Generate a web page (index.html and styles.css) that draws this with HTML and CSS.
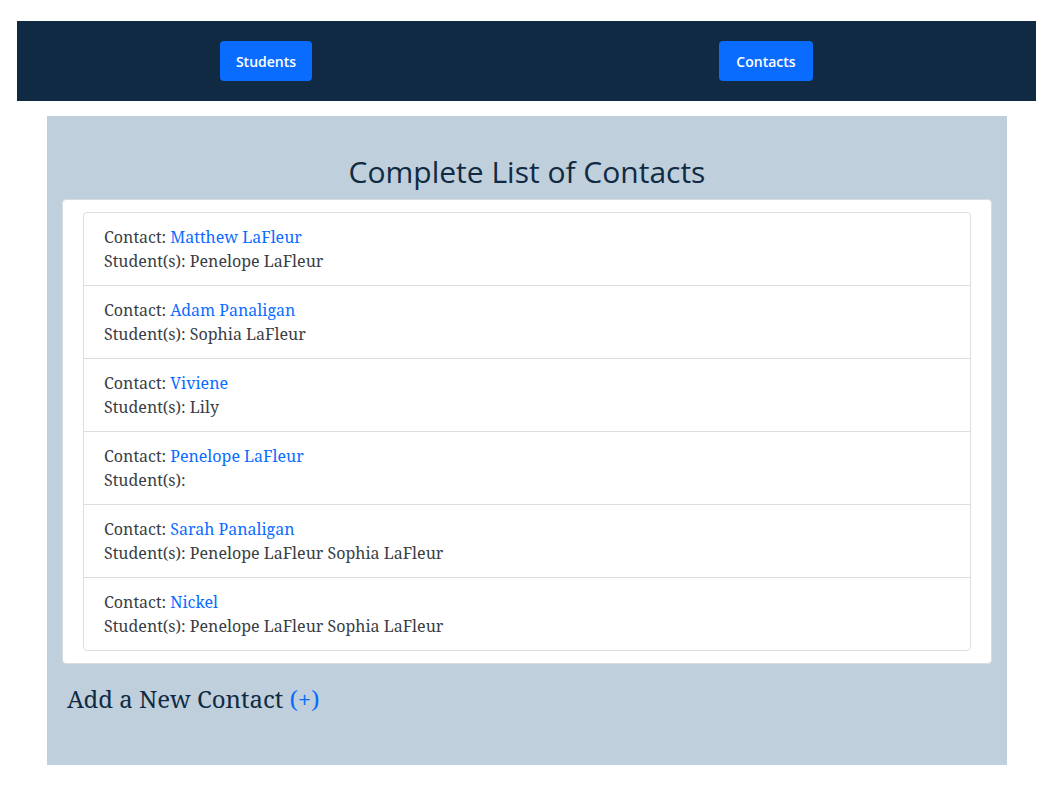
FILE: index.html
```html
<!DOCTYPE html>
<html>
<head>
<meta charset="utf-8">
<link rel="stylesheet" href="styles.css">
</head>
<body>
<div class="page">
  <nav class="nav">
    <a class="btn btn-students" href="#">Students</a>
    <a class="btn btn-contacts" href="#">Contacts</a>
  </nav>
  <main class="panel">
    <h1 class="title">Complete List of Contacts</h1>
    <div class="card">
      <ul class="list">
        <li class="item"><div>Contact: <a class="link" href="#">Matthew LaFleur</a></div><div>Student(s): Penelope LaFleur</div></li>
        <li class="item"><div>Contact: <a class="link" href="#">Adam Panaligan</a></div><div>Student(s): Sophia LaFleur</div></li>
        <li class="item"><div>Contact: <a class="link" href="#">Viviene</a></div><div>Student(s): Lily</div></li>
        <li class="item"><div>Contact: <a class="link" href="#">Penelope LaFleur</a></div><div>Student(s): </div></li>
        <li class="item"><div>Contact: <a class="link" href="#">Sarah Panaligan</a></div><div>Student(s): Penelope LaFleur Sophia LaFleur</div></li>
        <li class="item"><div>Contact: <a class="link" href="#">Nickel</a></div><div>Student(s): Penelope LaFleur Sophia LaFleur</div></li>
      </ul>
    </div>
    <h3 class="add">Add a New Contact <a class="link" href="#">(+)</a></h3>
  </main>
</div>
</body>
</html>
```
FILE: styles.css
```css
* { box-sizing: border-box; }
body {
  margin: 0;
  background: #ffffff;
  font-family: "Noto Serif", "DejaVu Serif", serif;
  color: #3a3e44;
}
.page {
  padding: 21px 16px 0 17px;
}
.nav {
  background: #102a43;
  height: 80px;
  display: flex;
  align-items: center;
  padding-left: 203px;
}
.btn {
  display: inline-flex;
  align-items: center;
  justify-content: center;
  height: 40px;
  background: #0a6cff;
  color: #ffffff;
  border-radius: 4px;
  text-decoration: none;
  font-family: "Open Sans", "Noto Sans", sans-serif;
  font-weight: 600;
  font-size: 14px;
}
.btn-students { width: 92px; }
.btn-contacts { width: 94px; margin-left: 407px; }
.panel {
  width: 960px;
  margin: 15px auto 0 30px;
  background: #bfcfdc;
  padding: 37px 15px 52px 15px;
}
.title {
  margin: 0 0 8px 0;
  text-align: center;
  font-family: "Open Sans", "Noto Sans", sans-serif;
  font-weight: 400;
  font-size: 30px;
  line-height: 38px;
  color: #102a43;
}
.card {
  background: #ffffff;
  border: 1px solid #d7dce0;
  border-radius: 4px;
  padding: 12px 20px;
}
.list {
  list-style: none;
  margin: 0;
  padding: 0;
  border: 1px solid #dcdfe2;
  border-radius: 4px;
}
.item {
  padding: 12px 20px;
  font-size: 16px;
  line-height: 24px;
  border-top: 1px solid #dcdfe2;
}
.item:first-child { border-top: none; }
.link {
  color: #0a6cff;
  text-decoration: none;
}
.add {
  margin: 20px 0 0 5px;
  font-size: 24px;
  line-height: 29px;
  font-weight: 400;
  color: #102a43;
}
```
